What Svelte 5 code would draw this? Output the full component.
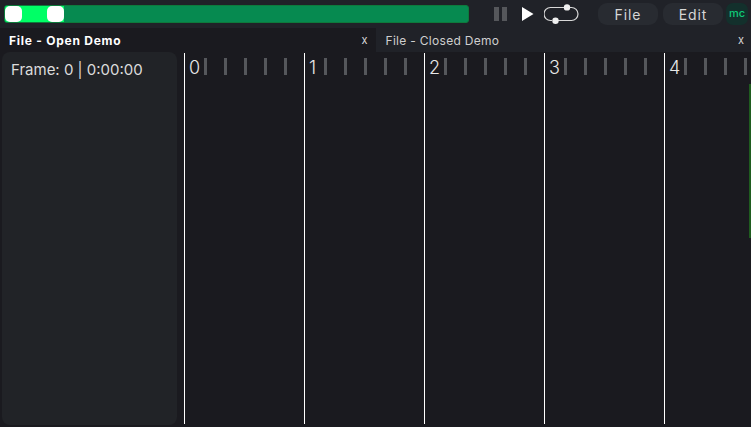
<script lang="ts">
  const tabs = [
    { name: 'File - Open Demo', active: true },
    { name: 'File - Closed Demo', active: false }
  ]
  const seconds = [0, 1, 2, 3, 4]
  const ticks = [0, 1, 2, 3, 4]
</script>

<div class="app">
  <header class="toolbar">
    <div class="timeline">
      <div class="range">
        <span class="handle"></span>
        <span class="handle"></span>
      </div>
    </div>
    <div class="controls">
      <svg class="pause" width="13" height="14" viewBox="0 0 13 14">
        <rect x="0" y="0" width="5" height="14" fill="#55575b" />
        <rect x="8" y="0" width="5" height="14" fill="#55575b" />
      </svg>
      <svg class="play" width="12" height="14" viewBox="0 0 12 14">
        <path d="M0 0 L11.5 7 L0 14 Z" fill="#fff" />
      </svg>
      <svg class="loop" width="35" height="20" viewBox="0 0 35 20">
        <path d="M6.5 3.5 H27.5 A6.5 6.5 0 0 1 27.5 16.5 H12 M8 16.5 H6.5 A6.5 6.5 0 0 1 6.5 3.5" fill="none" stroke="#d8d8d8" stroke-width="1.2" />
        <circle cx="23" cy="3.4" r="3.2" fill="#f0f0f0" />
        <circle cx="11.5" cy="16.8" r="3.2" fill="#f0f0f0" />
      </svg>
    </div>
    <button class="menu file">File</button>
    <button class="menu edit">Edit</button>
    <div class="logo">mc</div>
  </header>

  <nav class="tabs">
    {#each tabs as tab}
      <div class="tab" class:active={tab.active}>
        <span>{tab.name}</span>
        <span class="close">x</span>
      </div>
    {/each}
  </nav>

  <main class="body">
    <aside class="panel">Frame: 0 | 0:00:00</aside>
    <section class="ruler">
      {#each seconds as s}
        <div class="second">
          <span class="num">{s}</span>
          <div class="ticks">
            {#each ticks as t}
              <i></i>
            {/each}
          </div>
        </div>
      {/each}
      <div class="edge"></div>
    </section>
  </main>
</div>

<style>
  :global(body) {
    margin: 0;
    background: #1a1a1f;
  }
  .app {
    width: 751px;
    height: 427px;
    overflow: hidden;
    display: flex;
    flex-direction: column;
    background: #1a1a1f;
    color: #fff;
    font-family: Inter, "Noto Sans", sans-serif;
  }
  .toolbar {
    height: 28px;
    display: flex;
    align-items: center;
    background: #202228;
    flex: none;
  }
  .timeline {
    width: 465px;
    height: 18px;
    margin-left: 4px;
    box-sizing: border-box;
    border: 1px solid #0e7a3c;
    border-radius: 3px;
    background: #068a50;
    overflow: hidden;
    flex: none;
  }
  .range {
    width: 59px;
    height: 100%;
    background: #00ff66;
    display: flex;
    justify-content: space-between;
  }
  .handle {
    width: 17px;
    height: 100%;
    background: #fff;
    border-radius: 5px;
  }
  .controls {
    display: flex;
    align-items: center;
    margin-left: 25px;
    flex: none;
  }
  .play {
    margin-left: 15px;
  }
  .loop {
    margin-left: 10px;
  }
  .menu {
    width: 60px;
    height: 22px;
    padding: 0;
    border: 0;
    border-radius: 9px;
    background: #282b31;
    color: #d6d6d6;
    font: 14px Inter, "Noto Sans", sans-serif;
    letter-spacing: 0.9px;
    flex: none;
  }
  .file {
    margin-left: 19px;
  }
  .edit {
    margin-left: 5px;
  }
  .logo {
    width: 22px;
    height: 22px;
    margin-left: 3px;
    flex: none;
    border-radius: 7px;
    background: #13302c;
    color: #0fc878;
    font-size: 11px;
    font-weight: 500;
    line-height: 21px;
    text-align: center;
  }
  .tabs {
    height: 24px;
    display: flex;
    flex: none;
    background: #202228;
  }
  .tab {
    flex: 1;
    display: flex;
    justify-content: space-between;
    align-items: center;
    padding: 0 7px 0 10px;
    font-size: 12px;
    letter-spacing: 0.3px;
    color: #cfcfcf;
  }
  .tab.active {
    background: #1a1a1f;
    color: #fff;
    font-weight: 700;
    padding: 0 8px 0 9px;
    letter-spacing: 0.75px;
  }
  .close {
    font-size: 11px;
    font-weight: 400;
    letter-spacing: 0;
    color: #d8d8d8;
  }
  .body {
    flex: 1;
    display: flex;
    min-height: 0;
  }
  .panel {
    width: 175px;
    margin: 0 0 2px 2px;
    box-sizing: border-box;
    padding: 9px 9px;
    background: #212327;
    border-radius: 8px;
    color: #dcdcdc;
    font-size: 15px;
    line-height: 18px;
    flex: none;
  }
  .ruler {
    flex: 1;
    display: flex;
    margin: 1px 0 3px 7px;
    position: relative;
    min-width: 0;
  }
  .second {
    width: 120px;
    flex: none;
    box-sizing: border-box;
    border-left: 1px solid #fff;
    display: flex;
    align-items: flex-start;
    height: 100%;
  }
  .num {
    width: 19px;
    padding-left: 4px;
    box-sizing: border-box;
    font-size: 18px;
    line-height: 29px;
    color: #e8e8e8;
    font-weight: 300;
  }
  .ticks {
    display: flex;
    gap: 17px;
    padding-top: 5px;
  }
  .ticks i {
    display: block;
    width: 3px;
    height: 17px;
    background: #55575b;
  }
  .edge {
    position: absolute;
    right: 0;
    top: 31px;
    width: 2px;
    height: 154px;
    background: #1f5c1f;
  }
</style>
